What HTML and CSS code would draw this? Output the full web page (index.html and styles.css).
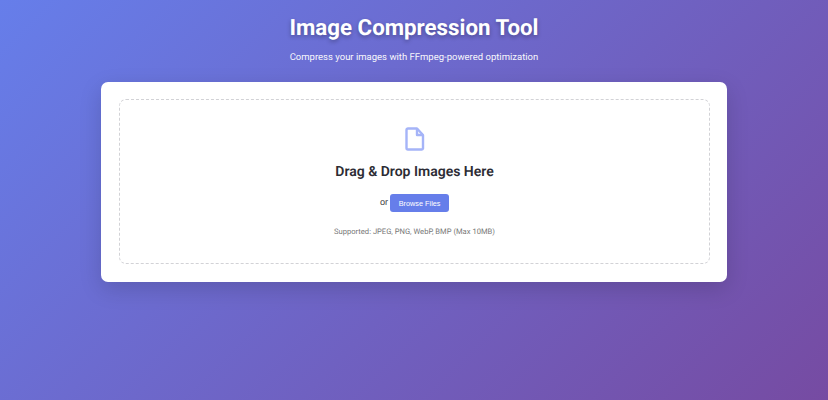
FILE: index.html
```html
<!DOCTYPE html>
<html lang="en">
<head>
<meta charset="utf-8">
<title>Image Compression Tool</title>
<link rel="stylesheet" href="styles.css">
</head>
<body>
<div class="container">
  <header class="header">
    <h1>Image Compression Tool</h1>
    <p>Compress your images with FFmpeg-powered optimization</p>
  </header>
  <main class="card">
    <div class="dropzone">
      <svg class="icon" width="20" height="24" viewBox="0 0 20 24" fill="none" stroke="#a5b4f8" stroke-width="2.4" stroke-linejoin="round" aria-hidden="true">
        <path d="M3 1.500h9l6 6.500v13.500a1.500 1.500 0 0 1-1.500 1H3A1.500 1.500 0 0 1 1.500 21V3A1.500 1.500 0 0 1 3 1.500z"/>
        <path d="M12 1.500V8h6"/>
      </svg>
      <h2>Drag &amp; Drop Images Here</h2>
      <div class="browse"><span>or</span><button type="button">Browse Files</button></div>
      <p class="formats">Supported: JPEG, PNG, WebP, BMP (Max 10MB)</p>
    </div>
  </main>
</div>
</body>
</html>
```
FILE: styles.css
```css
* { box-sizing: border-box; margin: 0; padding: 0; }
html, body { height: 100%; }
body {
  font-family: Roboto, "Open Sans", sans-serif;
  background: linear-gradient(135deg, #667eea 0%, #764ba2 100%);
  overflow: hidden;
  text-rendering: geometricPrecision;
}
.container { display: flex; flex-direction: column; align-items: center; padding-top: 15px; }
.header { text-align: center; color: #fff; height: 67px; }
.header h1 { font-size: 22.3px; line-height: 27px; font-weight: 700; text-shadow: 0 2px 4px rgba(0,0,0,.3); }
.header p { font-size: 9.5px; line-height: 15px; margin-top: 8px; opacity: .95; }
.card {
  width: 626px; height: 200px; padding: 17px 17px 17px 18px; background: #fff;
  border-radius: 7px; box-shadow: 0 7px 22px rgba(0,0,0,.15);
}
.dropzone {
  height: 165px; border: 1px dashed #d2d2d6; border-radius: 7px;
  display: flex; flex-direction: column; align-items: center; padding-top: 27px;
}
.icon { display: block; }
.dropzone h2 { font-size: 14px; line-height: 19px; font-weight: 600; color: #2c2c34; margin-top: 12px; }
.browse { display: flex; align-items: center; gap: 2px; margin-top: 12px; font-size: 9px; color: #444; }
.browse button {
  font-family: "Liberation Sans", Arial, sans-serif; font-size: 7.3px; height: 18px; width: 59px;
  border: 0; border-radius: 3px; background: #667eea; color: #fff;
}
.formats { font-size: 7.6px; line-height: 11px; color: #777; margin-top: 14px; }
```
